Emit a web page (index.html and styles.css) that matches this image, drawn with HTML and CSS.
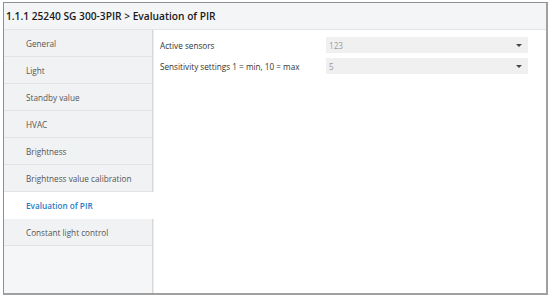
FILE: index.html
```html
<!DOCTYPE html>
<html>
<head>
<meta charset="utf-8">
<link rel="stylesheet" href="styles.css">
</head>
<body>
<div class="window">
  <div class="header">1.1.1 25240 SG 300-3PIR &gt; Evaluation of PIR</div>
  <div class="main">
    <nav class="sidebar">
      <div class="item">General</div>
      <div class="item">Light</div>
      <div class="item">Standby value</div>
      <div class="item">HVAC</div>
      <div class="item">Brightness</div>
      <div class="item">Brightness value calibration</div>
      <div class="item active">Evaluation of PIR</div>
      <div class="item">Constant light control</div>
      <div class="filler"></div>
    </nav>
    <section class="content">
      <div class="row">
        <div class="label">Active sensors</div>
        <div class="select"><span>123</span><span class="caret"></span></div>
      </div>
      <div class="row">
        <div class="label">Sensitivity settings 1 = min, 10 = max</div>
        <div class="select"><span>5</span><span class="caret"></span></div>
      </div>
    </section>
  </div>
</div>
</body>
</html>
```

FILE: styles.css
```css
* { box-sizing: border-box; }
html, body { margin: 0; padding: 0; background: #fff; }
body {
  width: 550px;
  height: 300px;
  padding: 2px 2px 5px 3px;
  font-family: "Open Sans", "Noto Sans", sans-serif;
  font-size: 8.2px;
  color: #333;
}
.window {
  height: 100%;
  border: 1px solid #8f8f8f;
  border-right: 2px solid #a0a0a0;
  border-bottom: 2px solid #a0a0a0;
  display: flex;
  flex-direction: column;
  background: #fff;
}
.header {
  height: 27px;
  flex: none;
  background: #f3f5f7;
  border-bottom: 1px solid #e2e5e8;
  padding-left: 2px;
  display: flex;
  align-items: center;
  font-size: 10.2px;
  font-weight: 600;
  color: #1a1a1a;
}
.main {
  flex: 1;
  display: flex;
  min-height: 0;
}
.sidebar {
  width: 149px;
  flex: none;
  display: flex;
  flex-direction: column;
  background: #f1f2f3;
  border-right: 1px solid #d8d8d8;
  box-shadow: 1px 0 0 #ececec;
}
.item {
  height: 27px;
  flex: none;
  display: flex;
  align-items: center;
  padding-left: 22px;
  border-bottom: 1px solid #e3e3e3;
  color: #555;
}
.item.active {
  background: #fff;
  color: #1f7dc4;
  font-weight: 600;
  border-bottom-color: #fff;
  margin-right: -2px;
}
.filler { flex: 1; background: #f4f6f7; }
.content {
  flex: 1;
  padding: 7px 18px 0 7px;
  display: flex;
  flex-direction: column;
  gap: 5px;
}
.row {
  display: flex;
  align-items: center;
  height: 16px;
}
.label {
  width: 166px;
  color: #333;
}
.select {
  flex: 1;
  height: 16px;
  background: #f0f0f0;
  display: flex;
  align-items: center;
  justify-content: space-between;
  padding: 0 6px 0 3px;
  color: #9a9a9a;
}
.caret {
  width: 0;
  height: 0;
  border-left: 3px solid transparent;
  border-right: 3px solid transparent;
  border-top: 3.5px solid #444;
}
```
